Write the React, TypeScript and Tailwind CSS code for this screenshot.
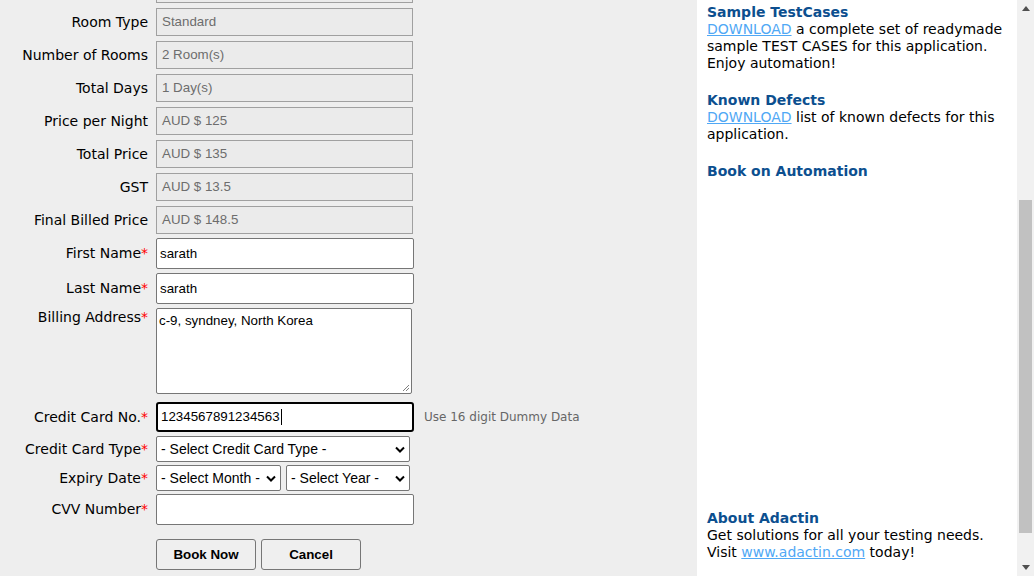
import React from "react";

const labelFont = { fontFamily: '"DejaVu Sans", Verdana, sans-serif' };
const inputFont = { fontFamily: '"Liberation Sans", Arial, sans-serif' };

function Label({ text, required }: { text: string; required?: boolean }) {
  return (
    <div className="w-[148px] shrink-0 text-right text-[14px] leading-[17px] text-black" style={labelFont}>
      {text}
      {required && <span className="text-[#ff0000]">*</span>}
    </div>
  );
}

function ReadonlyRow({ label, value, className = "" }: { label: string; value: string; className?: string }) {
  return (
    <div className={`flex items-center ${className}`}>
      <Label text={label} />
      <div
        className="ml-2 flex h-[28px] w-[257px] items-center border border-[#a0a0a0] bg-[#ebebeb] pl-[5px] text-[13.33px] text-[#6d6d6d]"
        style={inputFont}
      >
        {value}
      </div>
    </div>
  );
}

function TextRow({ label, value, className = "" }: { label: string; value: string; className?: string }) {
  return (
    <div className={`flex items-center ${className}`}>
      <Label text={label} required />
      <div
        className="ml-2 flex h-[31px] w-[258px] items-center rounded-[2px] border border-[#767676] bg-white pl-[3px] text-[13.33px] text-black"
        style={inputFont}
      >
        {value}
      </div>
    </div>
  );
}

function Chevron() {
  return (
    <svg width="10" height="7" viewBox="0 0 10 7" className="shrink-0">
      <polyline points="1,1.5 5,5.5 9,1.5" fill="none" stroke="#000" strokeWidth="2" />
    </svg>
  );
}

function Select({ text, width }: { text: string; width: string }) {
  return (
    <div
      className={`flex h-[26px] ${width} items-center justify-between rounded-[2px] border border-[#767676] bg-white pl-[4px] pr-[4px] text-[14px] text-black`}
      style={inputFont}
    >
      <span className="whitespace-nowrap">{text}</span>
      <Chevron />
    </div>
  );
}

function Scrollbar() {
  return (
    <div className="flex h-[576px] w-[17px] shrink-0 flex-col items-center bg-[#f1f1f1]">
      <div className="flex h-[17px] items-center justify-center">
        <svg width="8" height="5" viewBox="0 0 8 5">
          <polygon points="0,5 4,0 8,5" fill="#505050" />
        </svg>
      </div>
      <div className="mt-[183px] h-[333px] w-[13px] bg-[#c1c1c1]" />
      <div className="mt-auto flex h-[17px] items-center justify-center">
        <svg width="8" height="5" viewBox="0 0 8 5">
          <polygon points="0,0 8,0 4,5" fill="#505050" />
        </svg>
      </div>
    </div>
  );
}

export default function App() {
  return (
    <div className="flex h-[576px] w-[1034px] overflow-hidden bg-[#eeeeee]">
      {/* booking form, scrolled down */}
      <div className="w-[697px] shrink-0">
        <div className="-mt-[25px] flex flex-col">
          {/* row above the fold: only the bottom of its box shows */}
          <ReadonlyRow label="" value="" />
          <ReadonlyRow label="Room Type" value="Standard" className="mt-[5px]" />
          <ReadonlyRow label="Number of Rooms" value="2 Room(s)" className="mt-[5px]" />
          <ReadonlyRow label="Total Days" value="1 Day(s)" className="mt-[5px]" />
          <ReadonlyRow label="Price per Night" value="AUD $ 125" className="mt-[5px]" />
          <ReadonlyRow label="Total Price" value="AUD $ 135" className="mt-[5px]" />
          <ReadonlyRow label="GST" value="AUD $ 13.5" className="mt-[5px]" />
          <ReadonlyRow label="Final Billed Price" value="AUD $ 148.5" className="mt-[5px]" />

          <TextRow label="First Name" value="sarath" className="mt-[4px]" />
          <TextRow label="Last Name" value="sarath" className="mt-[4px]" />

          <div className="mt-[4px] flex items-start">
            <div className="pt-[1px]">
              <Label text="Billing Address" required />
            </div>
            <div
              className="relative ml-2 h-[86px] w-[256px] rounded-[2px] border border-[#767676] bg-white px-[2px] pt-[4px] text-[13.33px] leading-[16px] text-black"
              style={inputFont}
            >
              c-9, syndney, North Korea
              <svg width="8" height="8" viewBox="0 0 8 8" className="absolute bottom-[1px] right-[1px]">
                <line x1="1" y1="7" x2="7" y2="1" stroke="#808080" strokeWidth="1" />
                <line x1="4" y1="7" x2="7" y2="4" stroke="#808080" strokeWidth="1" />
              </svg>
            </div>
          </div>

          <div className="mt-[8px] flex items-center">
            <Label text="Credit Card No." required />
            <div
              className="ml-2 flex h-[30px] w-[258px] items-center rounded-[3px] border-2 border-black bg-white pl-[3px] text-[13.33px] text-black"
              style={inputFont}
            >
              1234567891234563
              <span className="ml-[1px] inline-block h-[16px] w-[1px] bg-black" />
            </div>
            <span className="ml-[10px] text-[12px] text-[#666666]" style={labelFont}>
              Use 16 digit Dummy Data
            </span>
          </div>

          <div className="mt-[4px] flex items-center">
            <Label text="Credit Card Type" required />
            <div className="ml-2">
              <Select text="- Select Credit Card Type -" width="w-[254px]" />
            </div>
          </div>

          <div className="mt-[3px] flex items-center">
            <Label text="Expiry Date" required />
            <div className="ml-2 flex gap-[5px]">
              <Select text="- Select Month -" width="w-[125px]" />
              <Select text="- Select Year -" width="w-[124px]" />
            </div>
          </div>

          <TextRow label="CVV Number" value="" className="mt-[3px]" />

          <div className="mt-[14px] flex">
            <div className="w-[148px] shrink-0" />
            <div className="ml-2 flex gap-[5px]">
              <button
                className="h-[31px] w-[100px] rounded-[3px] border border-[#767676] bg-[#efefef] text-[13.33px] font-bold text-black"
                style={inputFont}
              >
                Book Now
              </button>
              <button
                className="h-[31px] w-[100px] rounded-[3px] border border-[#767676] bg-[#efefef] text-[13.33px] font-bold text-black"
                style={inputFont}
              >
                Cancel
              </button>
            </div>
          </div>
        </div>
      </div>

      {/* side panel */}
      <div className="flex h-[576px] w-[320px] shrink-0 flex-col bg-white pl-[10px] pt-[4px] text-[14px] leading-[17px] text-black" style={labelFont}>
        <div>
          <div className="text-[14px] font-bold text-[#0c4f8f]">Sample TestCases</div>
          <div>
            <a className="text-[#50a8f5] underline">DOWNLOAD</a> a complete set of readymade sample TEST CASES for this
            application. Enjoy automation!
          </div>
        </div>
        <div className="mt-[20px]">
          <div className="text-[14px] font-bold text-[#0c4f8f]">Known Defects</div>
          <div>
            <a className="text-[#50a8f5] underline">DOWNLOAD</a> list of known defects for this application.
          </div>
        </div>
        <div className="mt-[20px]">
          <div className="text-[14px] font-bold text-[#0c4f8f]">Book on Automation</div>
        </div>
        <div className="mt-[330px]">
          <div className="text-[14px] font-bold text-[#0c4f8f]">About Adactin</div>
          <div>
            Get solutions for all your testing needs.
            <br />
            Visit <a className="text-[#50a8f5] underline">www.adactin.com</a> today!
          </div>
        </div>
      </div>

      <Scrollbar />
    </div>
  );
}
